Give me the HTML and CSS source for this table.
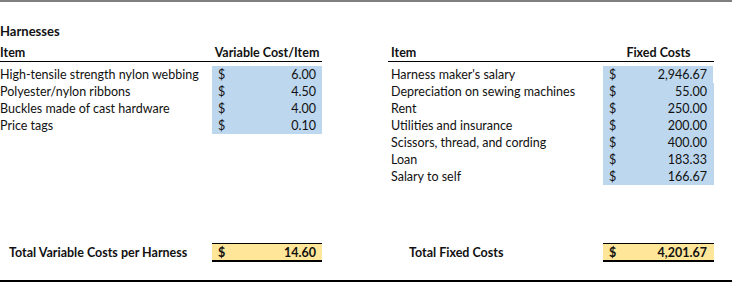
FILE: index.html
```html
<!DOCTYPE html>
<html>
<head>
<meta charset="utf-8">
<link rel="stylesheet" href="styles.css">
</head>
<body>
<div class="sheet">
  <h1 class="title">Harnesses</h1>
  <div class="tables">
    <section class="block var">
      <div class="head"><span class="hlabel">Item</span><span class="hcost">Variable Cost/Item</span></div>
      <div class="rows">
        <div class="row"><span class="label">High-tensile strength nylon webbing</span><span class="cell"><span>$</span><span>6.00</span></span></div>
        <div class="row"><span class="label">Polyester/nylon ribbons</span><span class="cell"><span>$</span><span>4.50</span></span></div>
        <div class="row"><span class="label">Buckles made of cast hardware</span><span class="cell"><span>$</span><span>4.00</span></span></div>
        <div class="row"><span class="label">Price tags</span><span class="cell"><span>$</span><span>0.10</span></span></div>
      </div>
      <div class="total"><span class="tlabel">Total Variable Costs per Harness</span><span class="tcell"><span>$</span><span>14.60</span></span></div>
    </section>
    <section class="block fixed">
      <div class="head"><span class="hlabel">Item</span><span class="hcost">Fixed Costs</span></div>
      <div class="rows">
        <div class="row first"><span class="label">Harness maker's salary</span><span class="cell"><span>$</span><span>2,946.67</span></span></div>
        <div class="row"><span class="label">Depreciation on sewing machines</span><span class="cell"><span>$</span><span>55.00</span></span></div>
        <div class="row"><span class="label">Rent</span><span class="cell"><span>$</span><span>250.00</span></span></div>
        <div class="row"><span class="label">Utilities and insurance</span><span class="cell"><span>$</span><span>200.00</span></span></div>
        <div class="row"><span class="label">Scissors, thread, and cording</span><span class="cell"><span>$</span><span>400.00</span></span></div>
        <div class="row"><span class="label">Loan</span><span class="cell"><span>$</span><span>183.33</span></span></div>
        <div class="row"><span class="label">Salary to self</span><span class="cell"><span>$</span><span>166.67</span></span></div>
      </div>
      <div class="total"><span class="tlabel">Total Fixed Costs</span><span class="tcell"><span>$</span><span>4,201.67</span></span></div>
    </section>
  </div>
</div>
</body>
</html>
```
FILE: styles.css
```css
* { box-sizing: border-box; }
html, body { margin: 0; padding: 0; background: #fff; }
body {
  font-family: Lato, "Liberation Sans", sans-serif;
  font-size: 12.5px;
  color: #111;
  width: 732px;
  height: 282px;
  overflow: hidden;
}
.sheet {
  height: 282px;
  border-top: 2px solid #7f7f7f;
  border-bottom: 2px solid #000;
  display: flex;
  flex-direction: column;
}
.title {
  margin: 21px 0 0 0;
  font-size: 13px;
  font-weight: 700;
  line-height: 17px;
  height: 17px;
}
.tables {
  margin-top: 4px;
  display: flex;
  flex: 1;
}
.block {
  display: flex;
  flex-direction: column;
}
.var { width: 322px; }
.fixed { margin-left: 66px; width: 326px; }
.head {
  display: flex;
  height: 18px;
  padding-top: 1px;
  line-height: 16px;
  font-weight: 700;
  border-bottom: 1px solid #000;
}
.hlabel { flex: 1; }
.fixed .hlabel { padding-left: 3px; }
.hcost { text-align: center; }
.var .hcost { width: 110px; }
.fixed .hcost { width: 111px; }
.rows { margin-top: 4px; }
.row {
  display: flex;
  height: 17px;
  line-height: 18px;
}
.label { flex: 1; white-space: nowrap; }
.fixed .label { padding-left: 3px; }
.cell, .tcell {
  display: flex;
  justify-content: space-between;
  background: #bdd7ee;
}
.var .cell { width: 110px; padding: 0 6px 0 6px; }
.fixed .cell { width: 111px; padding: 0 7px 0 6px; }
.fixed .first .cell { width: 111px; padding-right: 6px; border-right: 1px solid #fff; }
.total {
  margin-top: auto;
  margin-bottom: 18px;
  display: flex;
  align-items: center;
  font-weight: 700;
}
.tlabel { flex: 1; white-space: nowrap; }
.var .tlabel { padding-left: 9px; }
.fixed .tlabel { padding-left: 21px; }
.tcell {
  background: #ffe699;
  border-top: 1px solid #000;
  border-bottom: 2px solid #000;
  height: 19px;
  line-height: 17px;
}
.var .tcell { width: 110px; padding: 0 6px; }
.fixed .tcell { width: 111px; padding: 0 7px 0 6px; }
```
